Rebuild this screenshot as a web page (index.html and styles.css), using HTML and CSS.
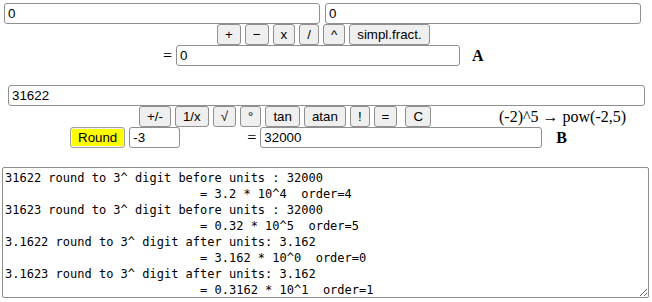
FILE: index.html
```html
<!DOCTYPE html>
<html lang="en">
 <head>
  <meta charset="UTF-8">
  <link rel="stylesheet" href="styles.css">
  <title>calc</title>
 </head>
 <body>
  <div class="calc">
   <!-- A: fractions -->
   <div class="row ops-a">
    <input class="txt half" type="text" value="0">
    <input class="txt half" type="text" value="0">
   </div>
   <div class="row btns btns-a">
    <button>+</button>
    <button>&minus;</button>
    <button>x</button>
    <button>/</button>
    <button>^</button>
    <button>simpl.fract.</button>
   </div>
   <div class="row res res-a">
    <span class="eq">=</span>
    <input class="txt wide-a" type="text" value="0">
    <b class="tag">A</b>
   </div>

   <!-- B: expression -->
   <div class="row expr">
    <input class="txt full" type="text" value="31622">
   </div>
   <div class="row btns btns-b">
    <button>+/-</button>
    <button>1/x</button>
    <button>&radic;</button>
    <button>&deg;</button>
    <button>tan</button>
    <button>atan</button>
    <button>!</button>
    <button>=</button>
    <button class="clear">C</button>
    <span class="hint">(-2)^5 &rarr; pow(-2,5)</span>
   </div>
   <div class="row res res-b">
    <button class="round">Round</button>
    <input class="txt digits" type="text" value="-3">
    <span class="eq eq-b">=</span>
    <input class="txt wide-b" type="text" value="32000">
    <b class="tag tag-b">B</b>
   </div>

   <textarea class="log" spellcheck="false">31622 round to 3^ digit before units : 32000
                           = 3.2 * 10^4  order=4
31623 round to 3^ digit before units : 32000
                           = 0.32 * 10^5  order=5
3.1622 round to 3^ digit after units: 3.162
                           = 3.162 * 10^0  order=0
3.1623 round to 3^ digit after units: 3.162
                           = 0.3162 * 10^1  order=1</textarea>
  </div>
 </body>
</html>
```
FILE: styles.css
```css
*{box-sizing:border-box}
body{
	margin:0;
	font-family:"Liberation Serif","Times New Roman",serif;
	font-size:16px;
	background:#fff;
}
.calc{
	width:652px;
	padding-top:3px;
}
.row{
	display:flex;
	align-items:center;
}
.txt{
	font-family:"Liberation Sans",Arial,sans-serif;
	font-size:13.33px;
	height:21px;
	padding:1px 3px;
	border:1px solid #8f8f8f;
	border-radius:3px;
	color:#000;
	background:#fff;
}
button{
	font-family:"Liberation Sans",Arial,sans-serif;
	font-size:13.33px;
	height:21px;
	padding:1px 7px;
	margin:0;
	color:#000;
	background:#efefef;
	border:1px solid #8f8f8f;
	border-radius:3px;
}

/* A */
.ops-a{padding-left:4px;gap:5px}
.half{width:316px}
.btns{gap:4px}
.btns-a{padding-left:217px}
.res-a{padding-left:163px}
.eq{margin-right:4px}
.wide-a{width:284px}
.tag{margin-left:12px;font-weight:bold}

/* B */
.expr{margin-top:19px;padding-left:8px}
.full{width:637px}
.btns-b{padding-left:139px}
.clear{margin-left:4px}
.hint{margin-left:64px}
.res-b{padding-left:70px}
.round{
	background:#ff0;
	border:1px solid #a0a0a0;
	box-shadow:inset 0 0 0 1px #f4f4f4;
}
.digits{width:51px;margin-left:4px}
.eq-b{margin-left:67px}
.wide-b{width:282px}
.tag-b{margin-left:14px}

.log{
	display:block;
	margin:19px 0 0 2px;
	width:647px;
	height:131px;
	padding:2px 2px;
	font-family:"DejaVu Sans Mono","Liberation Mono",monospace;
	font-size:12px;
	line-height:16px;
	border:1px solid #8f8f8f;
	border-radius:2px;
	white-space:pre;
	overflow:hidden;
	resize:both;
}
```
